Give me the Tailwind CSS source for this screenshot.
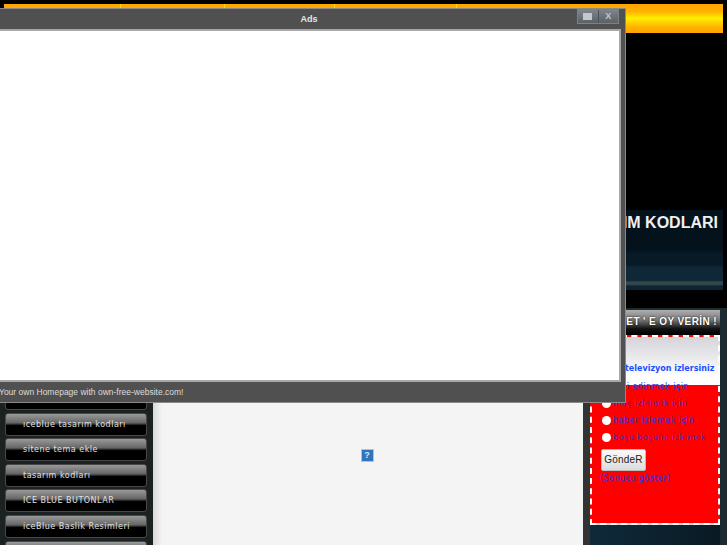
<!DOCTYPE html>
<html>
<head>
<meta charset="utf-8">
<script src="https://cdn.jsdelivr.net/npm/@tailwindcss/browser@4"></script>
</head>
<body class="bg-black">
<div class="relative w-[727px] h-[545px] overflow-hidden bg-black font-['Liberation_Sans',sans-serif]">
  <!-- top band -->
  <div class="pt-[4px] pl-[4px] pr-[4px]">
    <div class="flex h-[29px] bg-[linear-gradient(#ffa500_0%,#ffb000_25%,#ffee00_50%,#ffb000_80%,#ffa500_100%)]">
      <div class="w-[117px] border-r border-[#ffe000]"></div>
      <div class="w-[104px] border-r border-[#ffe000]"></div>
      <div class="w-[110px] border-r border-[#ffe000]"></div>
      <div class="w-[122px] border-r border-[#ffe000]"></div>
    </div>
  </div>
  <!-- header image -->
  <div class="mt-[177px] ml-[4px] mr-[4px] h-[80px] bg-[linear-gradient(#04121b_0%,#04121b_50%,#071a26_54%,#071a26_68%,#0e2838_72%,#0e2838_88%,#36474b_90%,#36474b_93%,#0c2434_95%)] flex justify-end">
    <div class="pt-[3px] pr-[5px] text-[16px] leading-[19px] font-bold text-[#f0f0f0]">TASARIM KODLARI</div>
  </div>
  <!-- columns -->
  <div class="mt-[18px] flex h-[237px]">
    <!-- left nav -->
    <div class="w-[153px] shrink-0 bg-[#1c2222] pl-[5px] pr-[6px] pt-[79px] flex flex-col gap-[2.6px] overflow-hidden font-['DejaVu_Sans',sans-serif]">
      <div class="h-[23px] shrink-0 rounded-[3px] border border-[#484848] bg-[linear-gradient(#999_0%,#666_42%,#000_55%,#000_100%)]"></div>
      <div class="h-[23px] shrink-0 rounded-[3px] border border-[#484848] bg-[linear-gradient(#999_0%,#666_42%,#000_55%,#000_100%)] pl-[17px] text-[8px] leading-[21px] tracking-[0.5px] text-[#e0e0e0]">ıceblue tasarım kodları</div>
      <div class="h-[23px] shrink-0 rounded-[3px] border border-[#484848] bg-[linear-gradient(#999_0%,#666_42%,#000_55%,#000_100%)] pl-[17px] text-[8px] leading-[21px] tracking-[0.5px] text-[#e0e0e0]">sitene tema ekle</div>
      <div class="h-[23px] shrink-0 rounded-[3px] border border-[#484848] bg-[linear-gradient(#999_0%,#666_42%,#000_55%,#000_100%)] pl-[17px] text-[8px] leading-[21px] tracking-[0.5px] text-[#e0e0e0]">tasarım kodları</div>
      <div class="h-[23px] shrink-0 rounded-[3px] border border-[#484848] bg-[linear-gradient(#999_0%,#666_42%,#000_55%,#000_100%)] pl-[17px] text-[8px] leading-[21px] tracking-[0.5px] text-[#e0e0e0]">ICE BLUE BUTONLAR</div>
      <div class="h-[23px] shrink-0 rounded-[3px] border border-[#484848] bg-[linear-gradient(#999_0%,#666_42%,#000_55%,#000_100%)] pl-[17px] text-[8px] leading-[21px] tracking-[0.5px] text-[#e0e0e0]">iceBlue Baslik Resimleri</div>
      <div class="h-[23px] shrink-0 rounded-[3px] border border-[#484848] bg-[linear-gradient(#999_0%,#666_42%,#000_55%,#000_100%)]"></div>
    </div>
    <!-- centre -->
    <div class="w-[430px] shrink-0 bg-[linear-gradient(90deg,#d8d8d8_0px,#f4f4f4_9px,#f4f4f4_100%)] flex justify-center pt-[141px]">
      <div class="ml-[-2px] w-[13px] h-[13px] bg-[#2f74bd] border border-[#a9c3e2] flex items-center justify-center text-[9px] leading-none font-bold text-[#dbe9f7]">?</div>
    </div>
    <!-- right column -->
    <div class="flex-1 bg-[linear-gradient(90deg,#333_0px,#333_7px,#1d2b30_7px,#1d2b30_100%)] pl-[7px] pr-[7px] flex flex-col">
      <div class="mt-[2px] h-[25px] bg-[linear-gradient(#b0b0b0_0%,#777_40%,#111_75%,#000_100%)] flex justify-end pr-[3px] text-[10px] leading-[24px] font-bold text-white tracking-[0.4px] [text-shadow:0_0_2px_#000] whitespace-nowrap">ET ' E OY VERİN !</div>
      <div class="h-[190px] border-2 border-dashed border-white bg-[linear-gradient(#d4d4da_0px,#ffffff_40px,#ffffff_48px,#ff0000_48px,#ff0000_100%)] pl-[8px] font-['DejaVu_Sans',sans-serif] text-[#3333dd] text-[8px] leading-[11px] tracking-[0.45px] whitespace-nowrap">
        <div class="pl-[25px] pt-[26px] font-bold text-[#1a4fff] tracking-normal">televizyon izlersiniz</div>
        <div class="mt-[4px] flex flex-col">
          <label class="h-[17px] flex items-center gap-[2px] pl-[2px]"><span class="w-[9px] h-[9px] rounded-full bg-white"></span><span>dini edinmek için</span></label>
          <label class="h-[17px] flex items-center gap-[2px] pl-[2px]"><span class="w-[9px] h-[9px] rounded-full bg-white"></span><span>maç izlemek için</span></label>
          <label class="h-[17px] flex items-center gap-[2px] pl-[2px]"><span class="w-[9px] h-[9px] rounded-full bg-white"></span><span>haber izlemek için</span></label>
          <label class="h-[17px] flex items-center gap-[2px] pl-[2px]"><span class="w-[9px] h-[9px] rounded-full bg-white"></span><span>boşu boşuna izlemek</span></label>
        </div>
        <div class="mt-[3px] ml-[1px] w-[45px] h-[22px] rounded-[2px] border border-[#bbb] bg-[linear-gradient(#fafafa,#dcdcdc)] text-center font-['Liberation_Sans',sans-serif] text-[10px] leading-[20px] tracking-[0.2px] text-[#222]">GöndeR</div>
        <div class="mt-[2px] leading-[12px]">(Sonucu göster)</div>
      </div>
      <div class="flex-1 bg-[linear-gradient(90deg,#0f2a3a,#0a1a24)]"></div>
    </div>
  </div>
  <!-- modal window -->
  <div class="absolute left-[-30px] top-[8px] w-[656px] h-[395px] bg-[#505050] border border-[#8a8a8a] flex flex-col">
    <div class="relative h-[20px] shrink-0 flex justify-center text-[9px] leading-[20px] font-bold text-[#e6e6e6] pl-[20px]">
      <span class="ml-[2px]">Ads</span>
      <div class="absolute right-[6px] top-0 flex h-[15px] w-[42px] border border-[#7a8288] bg-[linear-gradient(#7c848a,#5a6268)]">
        <div class="flex-1 flex items-center justify-center border-r border-[#4a5055]"><span class="w-[9px] h-[7px] bg-[#c4c8cc]"></span></div>
        <div class="flex-1 flex items-center justify-center text-[9px] leading-none font-bold text-[#c4c8cc]">X</div>
      </div>
    </div>
    <div class="flex-1 mr-[4px] ml-[4px] bg-white border-2 border-[#a8a8a8]"></div>
    <div class="h-[20px] shrink-0 pl-[28px] text-[8.5px] leading-[20px] text-[#dcdcdc]">Your own Homepage with own-free-website.com!</div>
  </div>
</div>
</body>
</html>
